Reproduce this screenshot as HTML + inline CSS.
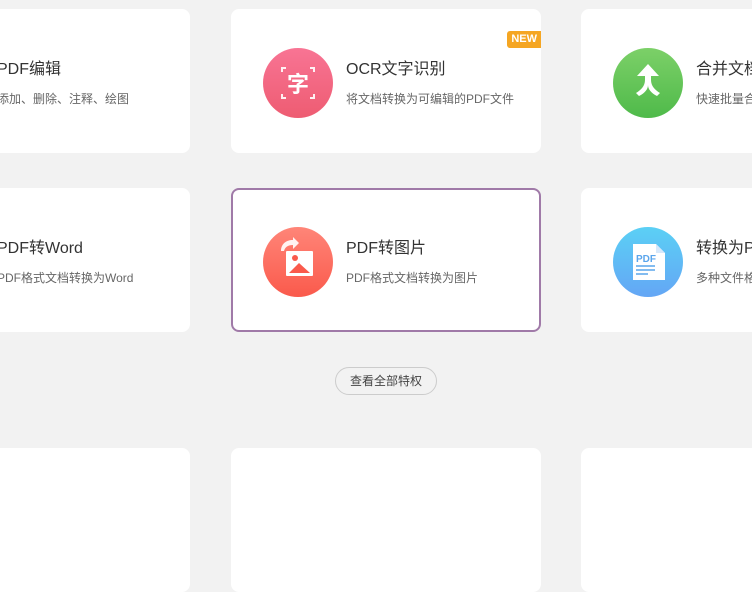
<!DOCTYPE html>
<html><head><meta charset="utf-8"><style>
*{margin:0;padding:0;box-sizing:border-box}
body{width:752px;height:460px;overflow:hidden;background:#f2f2f2;position:relative;font-family:"Liberation Sans","Noto Sans CJK SC",sans-serif}
.card{position:absolute;width:310px;height:144px;background:#fff;border-radius:8px}
.ic{position:absolute;left:32px;top:39px;width:70px;height:70px;border-radius:50%}
.t{position:absolute;left:115px;top:46px;font-size:16px;color:#333;white-space:nowrap}
.s{position:absolute;left:115px;top:81px;font-size:12px;color:#666;white-space:nowrap}
.sel{border:2px solid #a07aa8}
.sel .ic{left:30px;top:37px}.sel .t{left:113px;top:44px}.sel .s{left:113px;top:79px}
.new{position:absolute;right:0;top:22px;background:#f5a623;color:#fff;font-size:11px;font-weight:bold;padding:1px 4px;border-radius:3px 0 0 3px;line-height:15px}
.btn{position:absolute;left:335px;top:367px;width:102px;height:28px;border:1px solid #ccc;border-radius:14px;font-size:12px;color:#444;text-align:center;line-height:26px}
</style></head><body>
<div class="card" style="left:-120px;top:9px"><div class="t" style="left:117px">PDF编辑</div><div class="s" style="left:117px">添加、删除、注释、绘图</div></div>
<div class="card" style="left:231px;top:9px">
<div class="ic" style="background:linear-gradient(#f87494,#ee5c72)"><svg width="70" height="70"><g stroke="#fff" stroke-width="2" fill="none" opacity=".9"><path d="M19 24v-4h4M47 20h4v4M19 46v4h4M47 50h4v-4"/></g><text x="35" y="44" text-anchor="middle" fill="#fff" font-size="22" font-weight="bold" font-family="Noto Sans CJK SC,sans-serif">字</text></svg></div>
<div class="new">NEW</div>
<div class="t">OCR文字识别</div><div class="s">将文档转换为可编辑的PDF文件</div></div>
<div class="card" style="left:581px;top:9px">
<div class="ic" style="background:linear-gradient(#7cd068,#4fba4a)"><svg width="70" height="70"><path d="M35 16l-11 12h8v4c0 6-4 10-9 13l3 3c6-3 9-7 9-11 0 4 3 8 9 11l3-3c-5-3-9-7-9-13v-4h8z" fill="#fff"/></svg></div>
<div class="t">合并文档</div><div class="s">快速批量合并</div></div>
<div class="card" style="left:-120px;top:188px"><div class="t" style="left:117px">PDF转Word</div><div class="s" style="left:117px">PDF格式文档转换为Word</div></div>
<div class="card sel" style="left:231px;top:188px">
<div class="ic" style="background:linear-gradient(#ff8578,#fa5a4c)"><svg width="70" height="70"><path d="M18 24c0-7 5-11 12-11v-3l6 6-6 6v-4c-5 0-8 2-9 6z" fill="#fff" opacity=".9"/><rect x="23" y="24" width="27" height="25" rx="1" fill="#fff"/><circle cx="32" cy="31" r="3" fill="#fa5a4c"/><path d="M26 46l10-10 11 10z" fill="#fa5a4c"/></svg></div>
<div class="t">PDF转图片</div><div class="s">PDF格式文档转换为图片</div></div>
<div class="card" style="left:581px;top:188px">
<div class="ic" style="background:linear-gradient(#5bd0f5,#64a6f5)"><svg width="70" height="70"><path d="M20 17h23l9 9v27h-32z" fill="#fff"/><path d="M43 17v9h9z" fill="#d6e8fb"/><text x="23" y="35" fill="#5aa5ec" font-size="10" font-weight="bold" font-family="Liberation Sans">PDF</text><path d="M23 39h19M23 43h19M23 47h12" stroke="#5aa5ec" stroke-width="1.5"/></svg></div>
<div class="t">转换为PDF</div><div class="s">多种文件格式</div></div>
<div class="btn">查看全部特权</div>
<div class="card" style="left:-120px;top:448px"></div>
<div class="card" style="left:231px;top:448px"></div>
<div class="card" style="left:581px;top:448px"></div>
</body></html>
